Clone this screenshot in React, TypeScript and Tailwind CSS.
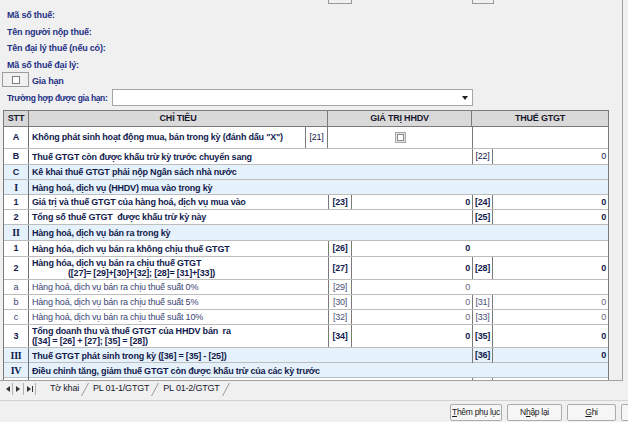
import React from 'react';

const GRID = 'grid grid-cols-[25px_276px_23px_24px_120px_21px_115px]';

type Row = {
  stt: string;
  roman?: boolean;
  lines: string[];
  indent?: boolean;
  blue?: boolean;
  h: string;
  thin?: boolean;
  plain?: boolean;
  g?: [string, string];
  t?: [string, string];
};

const rows: Row[] = [
  { stt: 'B', lines: ['Thuế GTGT còn được khấu trừ kỳ trước chuyển sang'], h: 'h-[16px]', plain: true, t: ['[22]', '0'] },
  { stt: 'C', lines: ['Kê khai thuế GTGT phải nộp Ngân sách nhà nước'], h: 'h-[15px]', blue: true },
  { stt: 'I', roman: true, lines: ['Hàng hoá, dịch vụ (HHDV) mua vào trong kỳ'], h: 'h-[15px]', blue: true },
  { stt: '1', lines: ['Giá trị và thuế GTGT của hàng hoá, dịch vụ mua vào'], h: 'h-[15px]', g: ['[23]', '0'], t: ['[24]', '0'] },
  { stt: '2', lines: ['Tổng số thuế GTGT  được khấu trừ kỳ này'], h: 'h-[15px]', t: ['[25]', '0'] },
  { stt: 'II', roman: true, lines: ['Hàng hoá, dịch vụ bán ra trong kỳ'], h: 'h-[16px]', blue: true },
  { stt: '1', lines: ['Hàng hóa, dịch vụ bán ra không chịu thuế GTGT'], h: 'h-[16px]', g: ['[26]', '0'] },
  { stt: '2', lines: ['Hàng hóa, dịch vụ bán ra chịu thuế GTGT', '([27]= [29]+[30]+[32]; [28]= [31]+[33])'], indent: true, h: 'h-[23px]', g: ['[27]', '0'], t: ['[28]', '0'] },
  { stt: 'a', lines: ['Hàng hoá, dịch vụ bán ra chịu thuế suất 0%'], h: 'h-[15px]', thin: true, g: ['[29]', '0'] },
  { stt: 'b', lines: ['Hàng hoá, dịch vụ bán ra chịu thuế suất 5%'], h: 'h-[15px]', thin: true, g: ['[30]', '0'], t: ['[31]', '0'] },
  { stt: 'c', lines: ['Hàng hoá, dịch vụ bán ra chịu thuế suất 10%'], h: 'h-[15px]', thin: true, g: ['[32]', '0'], t: ['[33]', '0'] },
  { stt: '3', lines: ['Tổng doanh thu và thuế GTGT của HHDV bán  ra', '([34] = [26] + [27]; [35] = [28])'], h: 'h-[23px]', g: ['[34]', '0'], t: ['[35]', '0'] },
  { stt: 'III', roman: true, lines: ['Thuế GTGT phát sinh trong kỳ ([36] = [35] - [25])'], h: 'h-[15px]', blue: true, t: ['[36]', '0'] },
  { stt: 'IV', roman: true, lines: ['Điều chỉnh tăng, giảm thuế GTGT còn được khấu trừ của các kỳ trước'], h: 'h-[15px]', blue: true },
  { stt: '', lines: [''], h: 'h-[15px]', t: ['', ''] },
];

function Check() {
  return (
    <span className="inline-block w-[11px] h-[11px] border border-[#a8a8a8] bg-[#e4e4e4] p-[1px]">
      <span className="block w-full h-full bg-white border border-[#8a8a8a]" />
    </span>
  );
}

function TableRow({ r }: { r: Row }) {
  const weight = r.thin ? 'font-normal' : 'font-bold';
  const color = r.thin ? 'text-[#3b4474]' : 'text-[#121a4d]';
  const numWeight = r.thin || r.plain ? 'font-normal' : 'font-bold';
  const numColor = r.thin ? 'text-[#6e6478]' : 'text-[#121a4d]';
  const span = r.g ? 'col-span-2' : r.t ? 'col-span-4' : 'col-span-6';
  return (
    <div className={`${GRID} ${r.h} border-b border-[#bdbdbd] ${r.blue ? 'bg-[#e6f2fb]' : 'bg-white'}`}>
      <div className={`flex items-center justify-center border-r border-[#6f6f6f] ${r.roman ? "font-['Liberation_Serif',serif] font-bold text-[10px]" : weight} ${color}`}>
        {r.stt}
      </div>
      <div className={`${span} flex flex-col justify-center pl-[3px] leading-[10px] ${weight} ${color} whitespace-pre`}>
        {r.lines.map((l, i) => (
          <span key={i} className={i === 1 && r.indent ? 'ml-[36px]' : ''}>{l}</span>
        ))}
      </div>
      {r.g && (
        <>
          <div className={`flex items-center justify-center border-x border-[#7a7a7a] ${numWeight} ${r.thin ? 'text-[#4a5078]' : color}`}>{r.g[0]}</div>
          <div className={`flex items-center justify-end pr-[2px] ${numWeight} ${numColor}`}>{r.g[1]}</div>
        </>
      )}
      {r.t ? (
        <>
          <div className={`flex items-center justify-center border-x border-[#7a7a7a] ${numWeight} ${r.thin ? 'text-[#4a5078]' : color}`}>{r.t[0]}</div>
          <div className={`flex items-center justify-end pr-[2px] ${numWeight} ${numColor}`}>{r.t[1]}</div>
        </>
      ) : r.g ? (
        <div className="col-span-2" />
      ) : null}
    </div>
  );
}

function Tri({ dir }: { dir: 'l' | 'r' }) {
  return (
    <svg width="4" height="6" viewBox="0 0 4 6">
      {dir === 'l' ? <path d="M4 0 L0 3 L4 6 Z" fill="#333" /> : <path d="M0 0 L4 3 L0 6 Z" fill="#333" />}
    </svg>
  );
}

function Slant() {
  return (
    <svg width="8" height="13" viewBox="0 0 8 13" className="mx-[2px]">
      <path d="M0.5 13 L7.5 0" stroke="#9a9a9a" strokeWidth="1" />
    </svg>
  );
}

export default function App() {
  const label = 'h-[16.6px] leading-[16.6px] pl-[7px] font-bold text-[#1f3185]';
  const btn = 'shrink-0 h-[17px] bg-[#f6f6f6] border border-[#acacac] rounded-[2px] whitespace-nowrap text-[8.5px] tracking-[-0.3px]';
  return (
    <div className="w-[628px] h-[427px] bg-[#f0f0f0] overflow-hidden font-['Liberation_Sans',Arial,sans-serif] text-[9px] tracking-[-0.2px] flex flex-col">
      <div className="h-[381px] w-[623px] shrink-0 border-r border-b border-[#a0a0a0] overflow-hidden">
        <div className="flex h-[4px]">
          <div className="w-[328px]" />
          <div className="w-[24px] h-[4px] border-x border-b border-[#9a9a9a] bg-[#f0f0f0]" />
          <div className="w-[120px]" />
          <div className="w-[22px] h-[4px] border-x border-b border-[#9a9a9a] bg-[#f0f0f0]" />
        </div>
        <div className="mt-[3px]">
          <div className={label}>Mã số thuế:</div>
          <div className={label}>Tên người nộp thuế:</div>
          <div className={label}>Tên đại lý thuế (nếu có):</div>
          <div className={label}>Mã số thuế đại lý:</div>
        </div>
        <div className="flex items-center h-[15px] mt-[-1px]">
          <div className="ml-[2px] w-[27px] h-[15px] border border-[#9c9c9c] flex items-center pl-[9px]">
            <span className="w-[8px] h-[8px] bg-white border border-[#7d7d7d]" />
          </div>
          <span className="ml-[3px] mt-[4px] font-bold text-[#1f3185]">Gia hạn</span>
        </div>
        <div className="flex items-center h-[17px] mt-[2px]">
          <span className="pl-[7px] w-[112px] shrink-0 whitespace-nowrap font-bold text-[#1f3185] text-[8.5px] tracking-[-0.35px]">Trường hợp được gia hạn:</span>
          <div className="w-[361px] h-[17px] bg-white border border-[#a5a5a5] flex items-center justify-end pr-[4px]">
            <svg width="6" height="4" viewBox="0 0 6 4"><path d="M0 0 H6 L3 4 Z" fill="#222" /></svg>
          </div>
        </div>
        <div className="ml-[3px] mt-[4px] w-[606px] border border-[#7a7a7a]">
          <div className={`${GRID} h-[16px] bg-[#d9d9d9] border-b border-[#7a7a7a] font-bold text-[#1a1a2e]`}>
            <div className="flex items-center justify-center border-r border-[#7a7a7a]">STT</div>
            <div className="col-span-2 flex items-center justify-center border-r border-[#7a7a7a]">CHỈ TIÊU</div>
            <div className="col-span-2 flex items-center justify-center border-r border-[#7a7a7a]">GIÁ TRỊ HHDV</div>
            <div className="col-span-2 flex items-center justify-center">THUẾ GTGT</div>
          </div>
          <div className={`${GRID} h-[22px] bg-white border-b border-[#bdbdbd] text-[#121a4d]`}>
            <div className="flex items-center justify-center border-r border-[#6f6f6f] font-bold">A</div>
            <div className="flex items-center pl-[3px] font-bold whitespace-nowrap">Không phát sinh hoạt động mua, bán trong kỳ (đánh dấu "X")</div>
            <div className="flex items-center justify-center border-x border-[#7a7a7a]">[21]</div>
            <div className="col-span-2 flex items-center justify-center"><Check /></div>
            <div className="col-span-2 border-l border-[#7a7a7a]" />
          </div>
          {rows.map((r, i) => (
            <TableRow key={i} r={r} />
          ))}
        </div>
      </div>
      <div className="h-[16px] shrink-0 flex items-center text-[#1a1a2e]">
        <div className="flex items-center h-[12px] ml-[3px]">
          <div className="w-[10px] h-full flex items-center justify-center border-r border-[#b0b0b0]"><Tri dir="l" /></div>
          <div className="w-[11px] h-full flex items-center justify-center border-r border-[#b0b0b0]"><Tri dir="r" /></div>
          <div className="w-[12px] h-full flex items-center justify-center border-r border-[#b0b0b0] gap-[1px]"><Tri dir="r" /><span className="w-[1px] h-[6px] bg-[#333]" /></div>
        </div>
        <span className="ml-[14px]">Tờ khai</span>
        <Slant />
        <span className="ml-[2px]">PL 01-1/GTGT</span>
        <Slant />
        <span className="ml-[2px]">PL 01-2/GTGT</span>
        <Slant />
      </div>
      <div className="h-[3px] shrink-0" />
      <div className="border-t border-[#d2d2d2] shrink-0" />
      <div className="h-[21px] shrink-0 flex items-center gap-[5px] pl-[450px] pt-[1px] text-[#1a1a1a]">
        <button className={`${btn} w-[52px]`}><u>T</u>hêm phụ lục</button>
        <button className={`${btn} w-[55px]`}>N<u>h</u>ập lại</button>
        <button className={`${btn} w-[49px]`}><u>G</u>hi</button>
        <button className={`${btn} w-[50px]`} />
      </div>
      <div className="flex-1 bg-white" />
    </div>
  );
}
